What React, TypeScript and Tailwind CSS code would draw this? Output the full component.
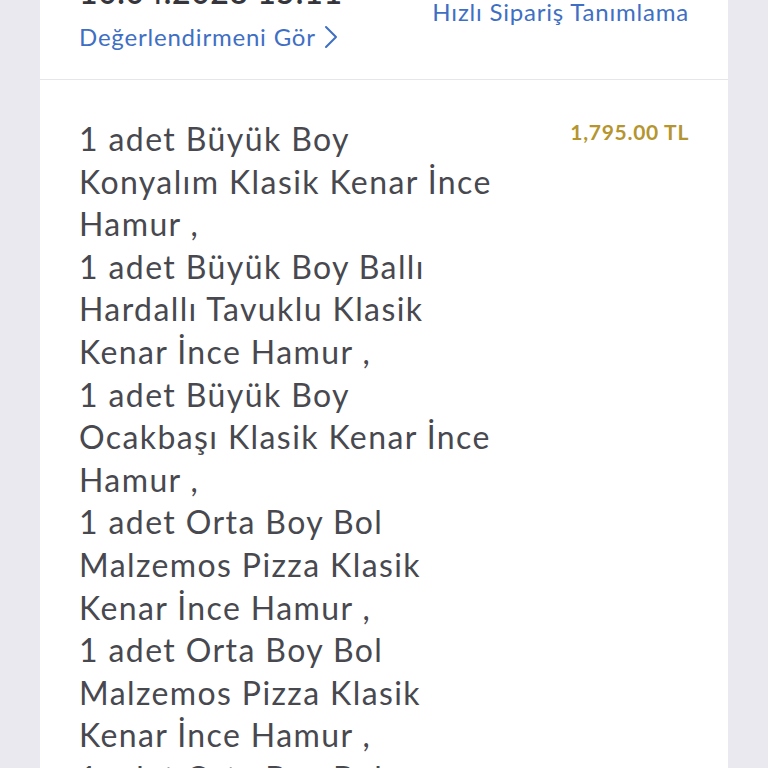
import React from 'react';

const lines: string[] = [
  '1 adet Büyük Boy',
  'Konyalım Klasik Kenar İnce',
  'Hamur ,',
  '1 adet Büyük Boy Ballı',
  'Hardallı Tavuklu Klasik',
  'Kenar İnce Hamur ,',
  '1 adet Büyük Boy',
  'Ocakbaşı Klasik Kenar İnce',
  'Hamur ,',
  '1 adet Orta Boy Bol',
  'Malzemos Pizza Klasik',
  'Kenar İnce Hamur ,',
  '1 adet Orta Boy Bol',
  'Malzemos Pizza Klasik',
  'Kenar İnce Hamur ,',
  '1 adet Orta Boy Bol',
];

const App: React.FC = () => {
  return (
    <div className="h-[768px] overflow-hidden bg-[#e9e9ef] px-[40px] font-['Lato',sans-serif]">
      <div className="bg-white min-h-full">
        {/* order header, scrolled partly out of view */}
        <div className="flex justify-between px-[39px] -mt-[30px] pb-[25px] border-b border-[#e6e6ea]">
          <div>
            <div className="text-[32px] leading-[44px] font-semibold tracking-[0.6px] text-[#35353b]">10.04.2023 15:11</div>
            <button className="mt-[6px] flex items-center gap-[8px] text-[24px] leading-[34px] tracking-[0.8px] text-[#3f6fc4]">
              Değerlendirmeni Gör
              <svg width="14" height="24" viewBox="0 0 14 24" fill="none">
                <path d="M2 2l10 10L2 22" stroke="#3f6fc4" strokeWidth="2" strokeLinecap="round" strokeLinejoin="round" />
              </svg>
            </button>
          </div>
          <div className="pt-[26px] text-[24px] leading-[32px] tracking-[0.8px] text-[#3f6fc4]">Hızlı Sipariş Tanımlama</div>
        </div>

        {/* products */}
        <div className="flex justify-between px-[39px] pt-[38px]">
          <div className="text-[32px] leading-[42.6px] tracking-[1.4px] text-[#48484f]">
            {lines.map((line, i) => (
              <div key={i} className="whitespace-nowrap">{line}</div>
            ))}
          </div>
          <div className="text-[21px] leading-[28px] font-bold tracking-[0.7px] text-[#b5952f] whitespace-nowrap">1,795.00 TL</div>
        </div>
      </div>
    </div>
  );
};

export default App;
